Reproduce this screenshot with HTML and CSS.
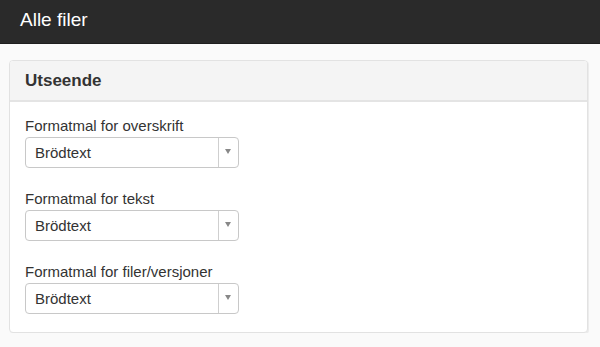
FILE: index.html
```html
<!DOCTYPE html>
<html lang="no">
<head>
  <meta charset="UTF-8">
  <meta name="viewport" content="width=device-width, initial-scale=1.0">
  <title>Alle filer</title>
  <link rel="stylesheet" href="styles.css">
</head>
<body>
  <div class="topbar">
    <h1>Alle filer</h1>
  </div>
  <div class="page">
    <div class="panel">
      <div class="panel-heading">
        <h2>Utseende</h2>
      </div>
      <div class="panel-body">
        <div class="form-group">
          <label>Formatmal for overskrift</label>
          <div class="select">
            <span class="select-value">Brödtext</span>
            <span class="select-arrow"></span>
          </div>
        </div>
        <div class="form-group">
          <label>Formatmal for tekst</label>
          <div class="select">
            <span class="select-value">Brödtext</span>
            <span class="select-arrow"></span>
          </div>
        </div>
        <div class="form-group">
          <label>Formatmal for filer/versjoner</label>
          <div class="select">
            <span class="select-value">Brödtext</span>
            <span class="select-arrow"></span>
          </div>
        </div>
      </div>
    </div>
  </div>
</body>
</html>
```

FILE: styles.css
```css
* {
  margin: 0;
  padding: 0;
  box-sizing: border-box;
}
body {
  background: #fafafa;
  font-family: 'Liberation Sans', Arial, Helvetica, sans-serif;
  color: #333;
}
.topbar {
  height: 44px;
  background: #2a2a2a;
  border-bottom: 1px solid #1e1e1e;
  display: flex;
  align-items: center;
  padding: 0 20px 4px;
}
.topbar h1 {
  color: #fff;
  font-size: 19px;
  font-weight: normal;
}
.page {
  padding: 16px 12px 0 9px;
}
.panel {
  background: #fff;
  border: 1px solid #e2e2e2;
  border-radius: 4px;
  box-shadow: 1px 1px 0 #ececec;
  overflow: hidden;
}
.panel-heading {
  height: 41px;
  background: #f4f4f4;
  border-bottom: 2px solid #e4e4e4;
  display: flex;
  align-items: center;
  padding: 0 15px 0 15px;
}
.panel-heading h2 {
  font-size: 17px;
  font-weight: bold;
  color: #333;
}
.panel-body {
  padding: 15px 15px 18px;
  display: flex;
  flex-direction: column;
  gap: 22px;
}
.form-group label {
  display: block;
  font-size: 15px;
  line-height: 17px;
  color: #333;
  margin-bottom: 3px;
}
.select {
  width: 214px;
  height: 31px;
  border: 1px solid #c8c8c8;
  border-radius: 4px;
  background: #fff;
  display: flex;
  align-items: stretch;
}
.select-value {
  flex: 1;
  display: flex;
  align-items: center;
  padding-left: 9px;
  font-size: 15px;
  color: #333;
  border-right: 1px solid #cfcfcf;
}
.select-arrow {
  width: 19px;
  position: relative;
}
.select-arrow::after {
  content: '';
  position: absolute;
  left: 6px;
  top: 11px;
  border-left: 3px solid transparent;
  border-right: 3px solid transparent;
  border-top: 5px solid #888;
}
```
